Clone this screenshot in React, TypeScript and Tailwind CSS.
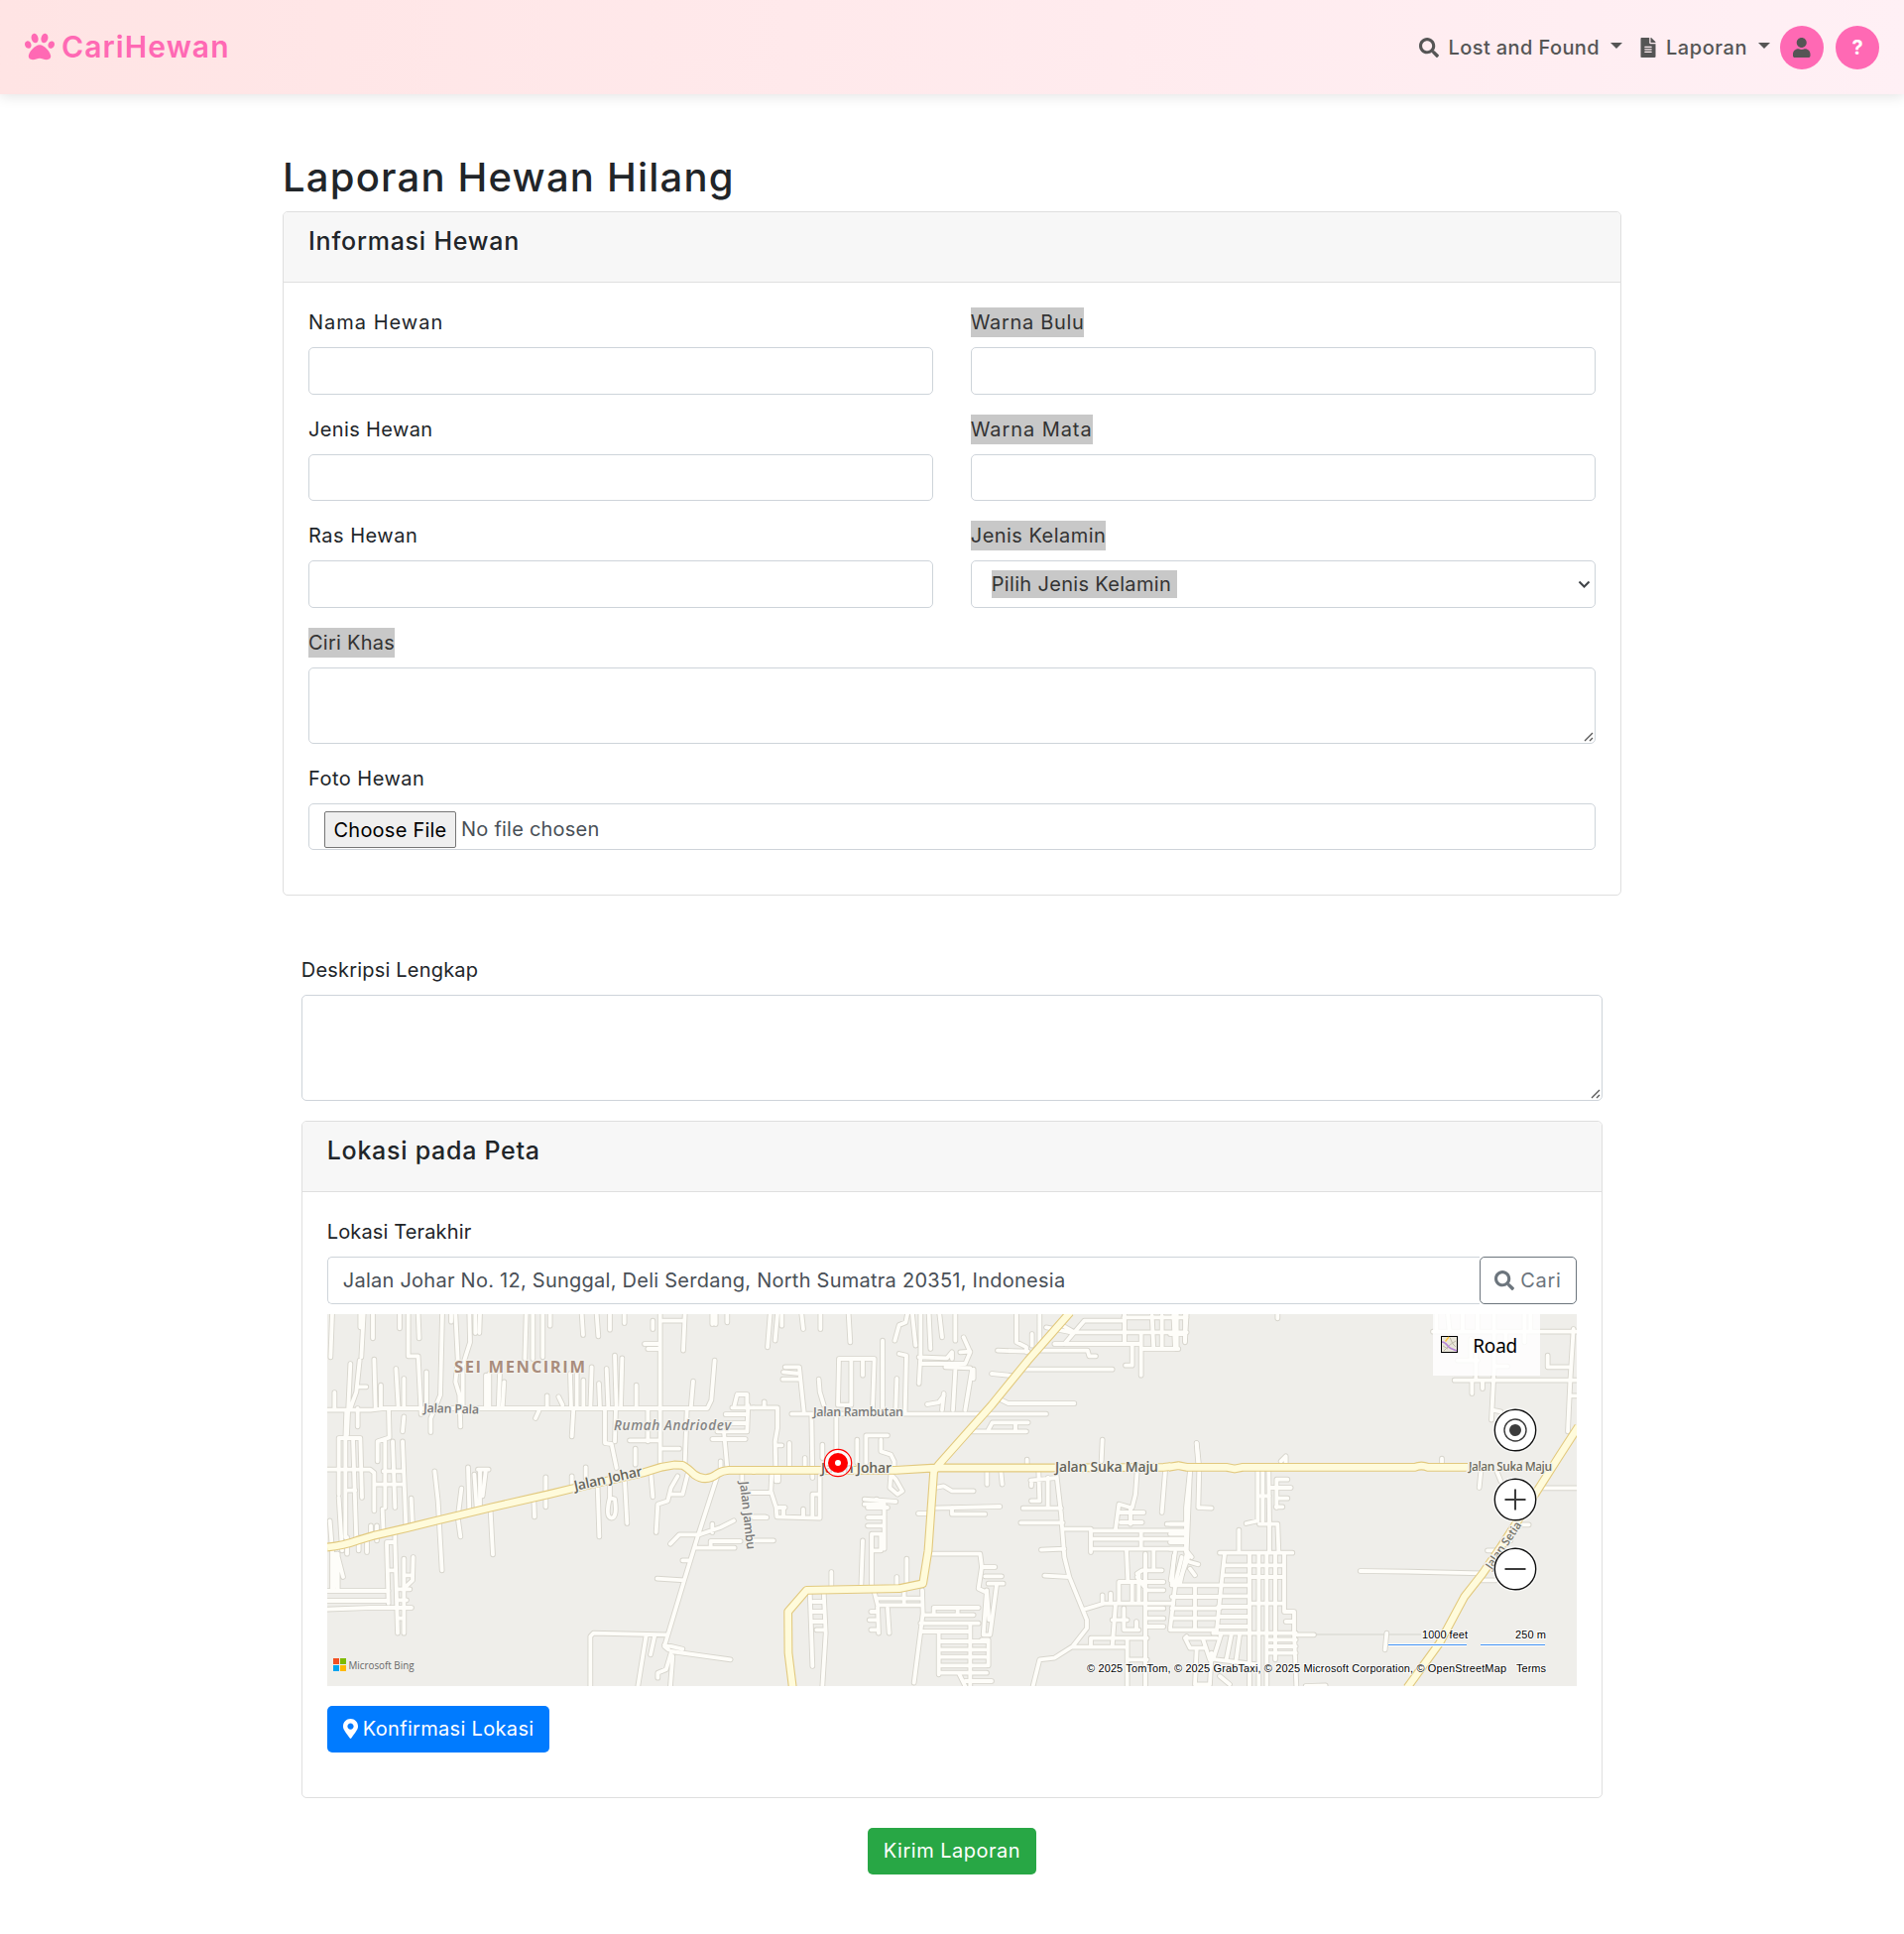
import React from "react";
import { FaPaw, FaSearch, FaFileAlt, FaUser, FaMapMarkerAlt } from "react-icons/fa";

/* Street network, split in three tiles; every tile unit is a third of a pixel. */
const TILES = [
  {
    transform: "translate(-10 -5) scale(.33333)",
    minor:
      "M45 15L40 145M130 15V55M140 15L133 145M168 15V88M249 15V58M275 15V142H305L314 318M305 15L308 88M378 15L372 260L343 330V372M405 15V38M418 15L425 150L418 220L430 260L433 355M460 15L462 100L440 170V300M478 15V72M492 15L490 72M632 15L628 150M652 15V150M682 15V145M704 15V50M800 15L804 78M845 15L850 82M885 15V62M929 15V42M1037 15V465M1037 35H1110M1112 15L1107 125M990 105H1035M1000 120H1035M1015 35V60M1195 15V45M1205 15V45M1240 15V40" +
      "M100 165L90 380M128 155L118 250L100 300M122 235H148M172 152L176 300M192 230V300M238 180L245 300M262 210V300M330 190V300M52 252V300M30 305H160L200 300H1180L1192 275L1202 155M88 305L85 390V690M122 300V355M216 305L218 388L182 400V460M262 325L258 370M510 200V300M520 195V300M552 195L548 300M565 220L560 300M765 195L768 300M785 195V300M805 215V300M830 175L826 300M852 225L855 300M875 180L880 300M900 140L905 300M922 148L918 300M965 230V300M695 262V300M730 265L742 290M775 300L770 385M670 308L660 330M870 300V405L890 408L905 480M903 300L900 400M1000 305V400M1137 218L1130 300M1118 305L1112 465M945 397H1035M1040 422H1095M962 422V470" +
      "M30 485H160L172 495V610M65 390H130L135 570M65 390V560M108 390L118 700M200 490H258M205 400V600M228 400L235 600M258 400L268 655M175 530H258M95 548H115M284 572L288 655M65 570L75 730M38 640L45 730V850M197 605L200 680M180 655V700M162 655V690M90 690V740M125 690V730M150 700V735M355 490L365 580L377 790M436 542L425 630L433 688M456 478L460 610M475 500L482 600M486 485H518M492 485V600M510 485L500 565M524 610L531 742M655 575L657 628M691 508V598M770 505V530M812 478V510M848 540L853 688M885 530V570M885 570Q870 630 890 632Q908 630 900 575ZM930 520L937 648M1008 485L1015 568" +
      "M1210 505L1150 690L1110 820L1050 1020L1062 1030M1028 815L1110 820M1068 710L1095 682H1155L1220 660L1260 640M1148 722H1262M1190 720V702H1280M1105 760H1125M1195 650V675M1025 675L1030 590L1060 580L1070 540L1090 505M1070 560H1105L1120 500M1230 370L1240 480M1195 393H1295M1210 370H1300L1303 290M1235 318H1300M1235 345H1300M1262 290L1270 258H1300V300M1255 298H1320M1220 460V485M1285 500V520M1310 555H1370M1315 628H1355M826 1140V990L835 980L1060 985M995 985L970 1140M1020 990L1008 1045M1070 1040L1055 1090L1030 1100V1115M1075 1050L1068 1140M1050 1015L1105 1028M1070 1035L1250 1060" +
      "M30 852H215M30 882H215M30 908L160 903H285M210 710L215 890M235 680V705L243 980M262 755V980M290 750L288 820L262 845M262 805H288M243 935H262M215 790H235M243 847H280M243 880H270M210 705H235M60 740L78 810M62 740V850M55 740L50 850",
    major: "M30 720Q80 715 120 700L170 685L270 662L360 640L525 600L700 560L770 543L985 495L1040 478L1080 471L1105 472Q1120 480 1140 500Q1175 525 1210 498Q1225 488 1245 487H1325",
  },
  {
    transform: "translate(430 -5) scale(.33333)",
    minor:
      "M50 15L42 115M85 15V50M72 15L65 95M145 15L150 60M202 15V60M287 15L292 100M465 15L460 40L440 48L427 95M480 15L490 110M505 15V140L500 225M530 15L535 120M562 15L570 85M610 15V95M500 145L580 148M505 165H640L655 130L635 85M585 148L600 130V150M625 130L655 128M580 175L655 178M390 95V300M440 135L462 140L458 310M258 150H365L360 300M258 150L255 290H295V155M330 150V200M433 210L430 300M95 175H138L152 310M90 190L140 195M88 212H140M197 212L200 250L212 290M115 317H885M250 320V430M175 320L178 510M0 298H72V360L65 400L68 520M65 412H85M32 280V298M108 405V480M155 450V480M208 410V450M313 395V465M340 465V382H405M385 395V430L415 440L425 460V490M415 500L412 540L435 560L450 550L430 515Z" +
      "M55 490L52 550L68 600L70 628L200 632V490M200 560H178V630M75 490V520M0 555H50M0 630H40M0 700H60M90 600V625M75 600H95M150 605V630M610 185L603 305M660 185L640 305M665 182V210M575 255L570 305M525 288L560 282L575 262M720 195L790 202M820 182H1085M750 275L770 285H970M660 370H825M710 365L722 343H830M792 343V370M795 15V100L825 115V130M842 75V110M738 125L830 128M865 15V100M870 125H1010L1015 142H1035M910 105H1170M940 105L1000 35H1120M955 70H1310M1122 15V105M1145 110V170H1125M1172 75L1172 200M1310 15L1305 95M1270 15L1275 120M1235 20V120M1205 20L1210 120M1175 120H1285M1120 25H1310M885 55L960 70M935 50L970 70" +
      "M827 455V478M1055 395L1052 460M1340 405L1345 470M706 490V530M748 490L752 530M548 540L575 535L600 550H665M535 602L745 597M600 600V620H700M498 618H530M535 740H685L690 780L680 845L700 855M815 602H930M808 646H935M838 518L915 510M840 520V535M862 490L865 580H840M890 510V600M915 490L930 620L940 750L955 810L1008 940V965L965 1020L910 1055L865 1060L845 1140M870 728L940 725M880 806L955 810M940 665H1020V735M1020 670H1310M1020 695H1310M1020 725H1310M1172 670V725M1160 490L1155 560L1145 600M1245 490L1235 615M1320 490L1310 735M1250 650H1310M1095 665L1105 590L1140 600V650M1105 615H1180M1110 645H1175" +
      "M1128 730L1132 820M1000 908L1060 890H1270M1055 865V890M1080 860V890M1105 825V885M1145 825V885M1165 800V885M1105 825H1240M1185 740V1140M1210 730V790M1160 800L1175 790H1235M1160 810L1190 850H1240M1275 735L1262 820M1310 740L1290 830M1095 890L1085 1020M1120 905V970H1165M1158 945V970M1085 940H1130M1185 905H1240M1190 935H1240M1190 960H1240M1020 1022V995H1190M965 1022H1120M1130 1000V1140M1130 1060H1190M1130 1090H1190" +
      "M235 795V840M330 700L325 840M357 850V680H385V730H360M395 725V590H335M345 630H390M345 655H390M335 575L430 582M345 600H405M372 575V600M433 810V840M463 755V840M170 855L178 1080M212 855L218 980L208 1140M180 885H210M180 915H210M180 945H210M190 970H215M365 855L375 895H510M370 875H510M455 850V895M375 900L378 980M355 915H375M350 940H375M355 970H375M405 905L410 980M510 850L512 920L485 1130M515 925H665M545 925V903H680M617 905V925M505 950H680M505 975H650M560 980V1105M655 950V1140M705 850L712 940M690 1000H710V1078M560 1005H710M560 1030H700M560 1052H700M560 1078H705M560 1100H705M620 1100L640 1140M640 1125H720M690 780H730M700 808H750M710 830H755M735 835L715 985H695L705 850",
    major: "M-5 487H430L550 480H900L1240 478L1262 476M957 10L830 155L720 290L560 470L545 490L528 730L512 830L440 845L160 850L104 915L105 1040L118 1145",
  },
  {
    transform: "translate(850 -5) scale(.33333)",
    minor:
      "M0 75H45M45 15V100M20 15V120M325 15V28M80 405L88 480L85 600L125 602M335 460L350 445V470M822 452V470M60 490L48 600V735M265 490V640L230 648M280 490V640M298 490L300 640M265 565H300M270 650H325L328 735M300 640V735M300 540H365M322 600V515H355M325 572H355M320 598H340M208 668V730M150 737H370M165 740L155 830L140 980M240 740V1140M268 740V1140M292 740V1140M318 740V1060M345 740V915H375V980L382 1140M350 945H375M165 775H235M160 805H235M150 835H235M150 868H235M145 900H235M145 930H235M145 960H235M130 980H380M240 775H345M240 810H345M240 890H345" +
      "M0 650H50M0 680H45M0 705H45M0 725H45L65 750M12 745L5 830M55 750L25 830M35 750L15 830M60 765L85 772M60 785L75 805M5 835H155M5 870H150M5 905H150M5 935H145M0 970H140M75 840V970M15 840L0 965M385 985H435M655 980L650 1030M575 792L720 794L940 799M860 215H1230M913 220V255M945 220V240M980 15L980 180L972 335M975 305L1000 310M795 68H1230M1220 60L1210 220L1203 370M1142 140V175H1210M1210 262H1230M1125 541H1230M940 490L935 540M988 490L1000 520M940 820H985M1060 652H1085M960 730H990M1030 690V700M870 155H930M925 90V210M910 90V150M1072 15V100M1090 15V68M840 15L845 68M805 15V68M885 15V68M930 15V68M980 173H1020M1015 68V120" +
      "M50 990L45 995L60 1025H100M45 995H140M80 1030L75 1135H120L125 1040M155 980L130 1060M100 1000L120 1060M185 985L170 1060M210 985L200 1060M140 1060L265 1075M300 1000H380M300 1020H380M300 1040H380M150 1110L180 1135M410 1140L470 1138",
    major: "M-5 478L25 473L50 478L170 478L195 483L220 478H740Q760 470 780 478H900M1235 355L1180 440L1110 550L1000 720L945 800L890 870L815 1010L717 1145",
  },
];

const LABEL = "font-['Open_Sans','Noto_Sans',sans-serif]";

function MapDrawing() {
  return (
    <svg className="block h-[375px] w-[1260px]" viewBox="0 0 1260 375">
      <rect width="1260" height="375" fill="#efeeea" />
      <path d="M995 323H1103" stroke="#dddcd6" strokeWidth="1.500" />
      <g fill="none" strokeLinecap="round" strokeLinejoin="round">
        {TILES.map((t) => (
          <path key={t.transform} d={t.minor} transform={t.transform} stroke="#d7d5cd" strokeWidth="17" />
        ))}
        {TILES.map((t) => (
          <path key={t.transform} d={t.minor} transform={t.transform} stroke="#fefdf9" strokeWidth="11.500" />
        ))}
      </g>
      <g fill="none" strokeLinejoin="round">
        {TILES.map((t) => (
          <path key={t.transform} d={t.major} transform={t.transform} stroke="#e2c97e" strokeWidth="26.500" />
        ))}
        {TILES.map((t) => (
          <path key={t.transform} d={t.major} transform={t.transform} stroke="#fffbdb" strokeWidth="20" />
        ))}
      </g>
      <g className={LABEL} stroke="#f4f3ee" strokeWidth="2.500" strokeLinejoin="round" paintOrder="stroke">
        <text x="128" y="59" fontSize="16.5" fontWeight="700" fill="#a98d7d" textLength="132">SEI MENCIRIM</text>
        <text x="97" y="99" fontSize="12.5" fontWeight="600" fill="#7a7a7a" textLength="56" transform="rotate(1.5 97 99)">Jalan Pala</text>
        <text x="289" y="117" fontSize="13.5" fontWeight="600" fontStyle="italic" fill="#858585" textLength="118">Rumah Andriodev</text>
        <text x="490" y="103" fontSize="12.5" fontWeight="600" fill="#7a7a7a" textLength="91">Jalan Rambutan</text>
        <text x="250" y="178" fontSize="14" fontWeight="600" fill="#66655a" textLength="70" transform="rotate(-12.5 250 178)">Jalan Johar</text>
        <text x="498" y="160" fontSize="14" fontWeight="600" fill="#66655a" textLength="71">Jalan Johar</text>
        <text x="734" y="159" fontSize="14" fontWeight="600" fill="#66655a" textLength="104">Jalan Suka Maju</text>
        <text x="1151" y="158" fontSize="12" fontWeight="600" fill="#6d6c60" textLength="84">Jalan Suka Maju</text>
        <text x="416" y="169" fontSize="12.5" fontWeight="600" fill="#7a7a7a" textLength="69" transform="rotate(84 416 169)">Jalan Jambu</text>
        <text x="1174" y="258" fontSize="11.5" fontWeight="600" fill="#77766a" textLength="55" transform="rotate(-56 1174 258)">Jalan Setia</text>
      </g>
      <g>
        <circle cx="515" cy="150" r="13.7" fill="#fff" fillOpacity=".75" stroke="#f00" strokeWidth="1.2" />
        <circle cx="515" cy="150" r="10" fill="#f00" />
        <circle cx="515" cy="150" r="3" fill="#fff" />
      </g>
      <path d="M6 347h6v6h-6z" fill="#f25022" />
      <path d="M13 347h6v6h-6z" fill="#7fba00" />
      <path d="M6 354h6v6h-6z" fill="#00a4ef" />
      <path d="M13 354h6v6h-6z" fill="#ffb900" />
      <text x="21.5" y="358" fontSize="11.5" fill="#666" className={LABEL} textLength="66" lengthAdjust="spacingAndGlyphs">Microsoft Bing</text>
      <g fill="#fff" stroke="#111" strokeWidth="1.4">
        <circle cx="1198" cy="117" r="23" stroke="none" fillOpacity=".5" />
        <circle cx="1198" cy="187" r="23" stroke="none" fillOpacity=".5" />
        <circle cx="1198" cy="257" r="23" stroke="none" fillOpacity=".5" />
        <circle cx="1198" cy="117" r="20.7" />
        <circle cx="1198" cy="187" r="20.7" />
        <circle cx="1198" cy="257" r="20.7" />
      </g>
      <g stroke="#3c3c3c" fill="none">
        <circle cx="1198" cy="117" r="11" strokeWidth="1.4" />
        <circle cx="1198" cy="117" r="6" fill="#3c3c3c" stroke="none" />
        <path d="M1187.500 187h21M1198 176.500v21M1187.500 257h21" strokeWidth="2" />
      </g>
      <g stroke="#fff" strokeWidth="3">
        <path d="M1070 333.500h79M1163 333.500h65" />
      </g>
      <path d="M1070 333.500h79M1163 333.500h65" stroke="#3e8ef0" strokeWidth="1" />
      <g className="font-['Liberation_Sans',Arial,sans-serif]" fill="#000" fontSize="11" stroke="#fff" strokeOpacity=".8" strokeWidth="2" paintOrder="stroke">
        <text x="1104" y="327" textLength="46">1000 feet</text>
        <text x="1198" y="327" textLength="31">250 m</text>
        <text x="766" y="361" textLength="423">© 2025 TomTom, © 2025 GrabTaxi, © 2025 Microsoft Corporation, © OpenStreetMap</text>
        <text x="1199" y="361" textLength="30">Terms</text>
      </g>
    </svg>
  );
}

function Label({ children, className = "", selected = false }: { children: React.ReactNode; className?: string; selected?: boolean }) {
  return (
    <div className="mb-[10px] flex h-[30px]">
      <span className={`${selected ? "bg-[#c8c8c8] text-[#333]" : ""} whitespace-nowrap ${className}`}>{children}</span>
    </div>
  );
}

const BOX = "block w-full rounded-[5px] border border-[#ced4da] bg-white";

function Field({ label, tracking, selected }: { label: string; tracking: string; selected?: boolean }) {
  return (
    <div className="mb-5">
      <Label className={tracking} selected={selected}>{label}</Label>
      <input className={`${BOX} h-[47.5px]`} />
    </div>
  );
}

function TextArea({ className }: { className: string }) {
  return (
    <div className="relative">
      <textarea className={`${BOX} resize-none ${className}`} />
      <svg className="absolute right-[2px] bottom-[2px] h-[10px] w-[10px]" viewBox="0 0 10 10">
        <path d="M1 9L9 1M6 9L9 6" stroke="#555" strokeWidth="1.300" />
      </svg>
    </div>
  );
}

function CardHeader({ children, className }: { children: React.ReactNode; className: string }) {
  return (
    <div className={`h-[71px] rounded-t-[4px] border-b border-[#dfdfdf] bg-[#f7f7f7] px-[25px] pt-[14px] text-[25px] leading-[30px] font-medium ${className}`}>
      {children}
    </div>
  );
}

function Caret() {
  return <span className="mb-[3px] h-0 w-0 border-x-[6px] border-t-[6px] border-x-transparent border-t-[#555]" />;
}

export default function App() {
  return (
    <div className="h-[1950px] w-[1920px] overflow-hidden bg-white font-[Inter,sans-serif] text-[20px] leading-[30px] text-[#212529]">
      <nav className="flex h-[95px] items-center justify-between bg-linear-to-r from-[#ffe4e4] to-[#fff0f5] px-[25px] text-[#555] shadow-[0_3px_12px_rgba(0,0,0,0.1)]">
        <div className="-mt-px flex items-center text-[30px] font-semibold text-[#ff69b4]">
          <FaPaw className="h-[30px] w-[30px]" />
          <span className="ml-[7px] tracking-[1.1px]">CariHewan</span>
        </div>
        <div className="flex items-center font-medium">
          <FaSearch className="h-5 w-5" />
          <span className="ml-[10px] tracking-[0.39px]">Lost and Found</span>
          <span className="ml-[11px] flex"><Caret /></span>
          <FaFileAlt className="ml-[18px] h-5 w-[16px]" />
          <span className="ml-[10px] tracking-[0.55px]">Laporan</span>
          <span className="ml-[11px] flex"><Caret /></span>
          <span className="ml-[10px] flex h-[44px] w-[44px] items-center justify-center rounded-full bg-[#ff69b4]">
            <FaUser className="h-5 w-[17.5px]" />
          </span>
          <span className="ml-3 flex h-[44px] w-[44px] items-center justify-center rounded-full bg-[#ff69b4] font-bold text-white">?</span>
        </div>
      </nav>

      <main className="mx-auto w-[1350px] pt-[60px]">
        <h1 className="mb-[10px] text-[40px] leading-[48px] font-medium tracking-[1.2px] whitespace-nowrap">Laporan Hewan Hilang</h1>

        <section className="rounded-[5px] border border-[#dfdfdf] bg-white">
          <CardHeader className="tracking-[0.78px]">Informasi Hewan</CardHeader>
          <div className="p-[25px]">
            <div className="grid grid-cols-2 gap-x-[37.5px]">
              <div>
                <Field label="Nama Hewan" tracking="tracking-[1px]" />
                <Field label="Jenis Hewan" tracking="tracking-[0.36px]" />
                <Field label="Ras Hewan" tracking="tracking-[0.5px]" />
              </div>
              <div>
                <Field label="Warna Bulu" tracking="tracking-[0.67px]" selected />
                <Field label="Warna Mata" tracking="tracking-[0.92px]" selected />
                <div>
                  <Label className="tracking-[0.47px]" selected>Jenis Kelamin</Label>
                  <div className={`${BOX} flex h-[47.5px] items-center justify-between pr-1 pl-5`}>
                    <span className="flex h-[28px] w-[187px] items-center bg-[#c8c8c8] tracking-[0.32px] whitespace-nowrap text-[#333]">Pilih Jenis Kelamin</span>
                    <svg className="mt-px h-[9px] w-[13px]" viewBox="0 0 13 9">
                      <path d="M1.500 1.500L6.500 6.500L11.500 1.500" fill="none" stroke="#3f4347" strokeWidth="2" />
                    </svg>
                  </div>
                </div>
              </div>
            </div>
            <div className="mb-5">
              <Label className="tracking-[0.24px]" selected>Ciri Khas</Label>
              <TextArea className="h-[77.5px]" />
            </div>
            <div className="mb-5">
              <Label className="tracking-[0.48px]">Foto Hewan</Label>
              <div className={`${BOX} flex h-[47px] items-start pt-[7px] pl-[15px] whitespace-nowrap`}>
                <span className="flex h-[37px] w-[133px] items-center justify-center rounded-[2px] border border-[#767676] bg-[#efefef] tracking-[0.24px] text-black">Choose File</span>
                <span className="ml-[5px] leading-[37px] tracking-[0.23px] text-[#495057]">No file chosen</span>
              </div>
            </div>
          </div>
        </section>

        <div className="mt-[59.5px] px-[18.75px]">
          <div className="mb-5">
            <Label className="tracking-[0.2px]">Deskripsi Lengkap</Label>
            <TextArea className="h-[107.5px]" />
          </div>

          <section className="rounded-[5px] border border-[#dfdfdf] bg-white">
            <CardHeader className="tracking-[0.72px]">Lokasi pada Peta</CardHeader>
            <div className="p-[25px]">
              <Label className="tracking-[0.14px]">Lokasi Terakhir</Label>
              <div className="mb-[10px] flex h-[47.5px]">
                <div className="flex flex-1 items-center rounded-l-[5px] border border-r-0 border-[#ced4da] pl-[15px] tracking-[0.255px] whitespace-nowrap text-[#495057]">
                  Jalan Johar No. 12, Sunggal, Deli Serdang, North Sumatra 20351, Indonesia
                </div>
                <button className="flex w-[98px] items-center rounded-[5px] border border-[#6c757d] pl-[14px] tracking-[0.7px] text-[#6c757d]">
                  <FaSearch className="mr-[6px] h-5 w-5 shrink-0" />
                  Cari
                </button>
              </div>
              <div className="relative h-[375px] overflow-hidden">
                <MapDrawing />
                <div className="absolute top-0 right-[37px] flex h-[62px] w-[108px] items-center bg-white/85 pl-2">
                  <svg className="h-[17px] w-[17px]" viewBox="0 0 17 17">
                    <rect x=".5" y=".5" width="16" height="16" fill="#e9e6da" stroke="#000" />
                    <path d="M3 15L9 9L15 5M9 1.500L12 8L15 11M2 10L7 13" fill="none" stroke="#bdb9a8" />
                    <path d="M4.500 5.500L8 1" stroke="#ffc83d" strokeWidth="1.500" fill="none" />
                    <path d="M1 6C6 6 6 11 10 12.500L16 15" fill="none" stroke="#b583d6" strokeWidth="1.700" />
                  </svg>
                  <span className="mt-[2px] ml-[15px] font-['Noto_Sans',sans-serif] text-[19px] tracking-[-0.2px] text-black">Road</span>
                </div>
              </div>
              <button className="mt-5 mb-5 flex h-[47px] w-[224px] items-center rounded-[5px] bg-[#007bff] pl-4 tracking-[0.32px] whitespace-nowrap text-white">
                <FaMapMarkerAlt className="mr-[5px] h-5 w-[15px] shrink-0" />
                Konfirmasi Lokasi
              </button>
            </div>
          </section>

          <div className="mt-[30px] flex justify-center">
            <button className="h-[47px] w-[170px] rounded-[5px] bg-[#28a745] tracking-[0.5px] whitespace-nowrap text-white">Kirim Laporan</button>
          </div>
        </div>
      </main>
    </div>
  );
}
